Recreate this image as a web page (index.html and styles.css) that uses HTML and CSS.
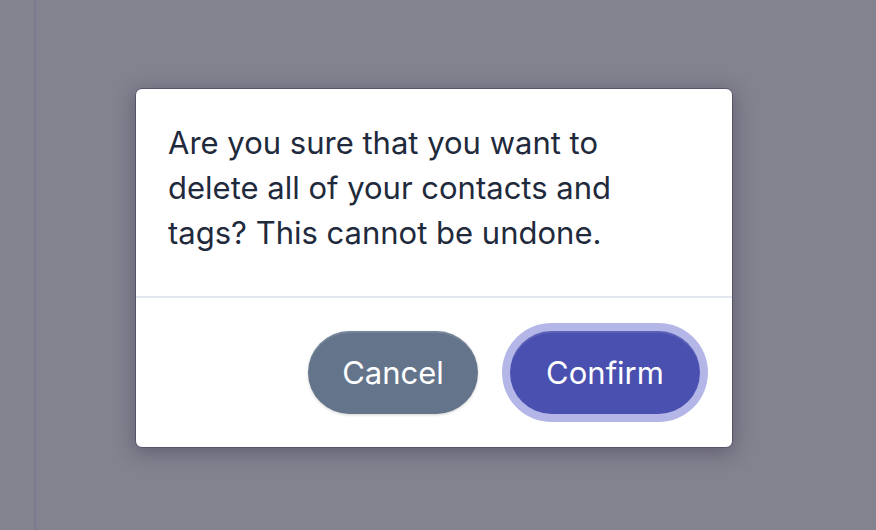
FILE: index.html
```html
<!DOCTYPE html>
<html lang="en">
<head>
<meta charset="utf-8">
<title>Confirm delete</title>
<link rel="stylesheet" href="styles.css">
</head>
<body>
<div class="app">
  <aside class="sidebar"></aside>
  <main class="content"></main>
</div>
<div class="overlay">
  <div class="modal" role="dialog">
    <div class="modal-body">
      <p class="message">Are you sure that you want to delete all of your contacts and tags? This cannot be undone.</p>
    </div>
    <div class="modal-footer">
      <button class="btn btn-cancel">Cancel</button>
      <button class="btn btn-confirm">Confirm</button>
    </div>
  </div>
</div>
</body>
</html>
```
FILE: styles.css
```css
html, body {
  margin: 0;
  height: 100%;
}
body {
  background: #83828f;
  font-family: Inter, "Noto Sans", "Liberation Sans", sans-serif;
  overflow: hidden;
}
.app {
  display: flex;
  height: 100%;
}
.sidebar {
  width: 34px;
  border-right: 2px solid #7b7a8f;
  flex: none;
}
.content {
  flex: 1;
}
.modal {
  position: absolute;
  left: 135px;
  top: 88px;
  width: 596px;
  background: #fff;
  border: 1px solid #55546a;
  border-radius: 7px;
  box-shadow: 0 4px 20px rgba(40, 38, 60, 0.4);
  overflow: hidden;
}
.modal-body {
  padding: 31px 32px 41px;
  border-bottom: 2px solid #e3e7ef;
}
.message {
  margin: 0;
  max-width: 470px;
  font-size: 31px;
  line-height: 45px;
  color: #1f2a3c;
}
.modal-footer {
  display: flex;
  justify-content: flex-end;
  gap: 32px;
  padding: 33px 32px 33px;
}
.btn {
  font-family: inherit;
  font-size: 31px;
  color: #fff;
  border: none;
  border-radius: 999px;
  height: 83px;
  padding: 0 30px;
  cursor: pointer;
}
.btn-cancel {
  background: #64748b;
  width: 170px;
  box-shadow: inset 0 2px 0 rgba(255,255,255,0.12), 0 1px 3px rgba(0,0,0,0.18);
}
.btn-confirm {
  background: #4a50b0;
  width: 190px;
  box-shadow: inset 0 2px 0 rgba(255,255,255,0.1), 0 0 0 8px #b4b6e8;
}
```
